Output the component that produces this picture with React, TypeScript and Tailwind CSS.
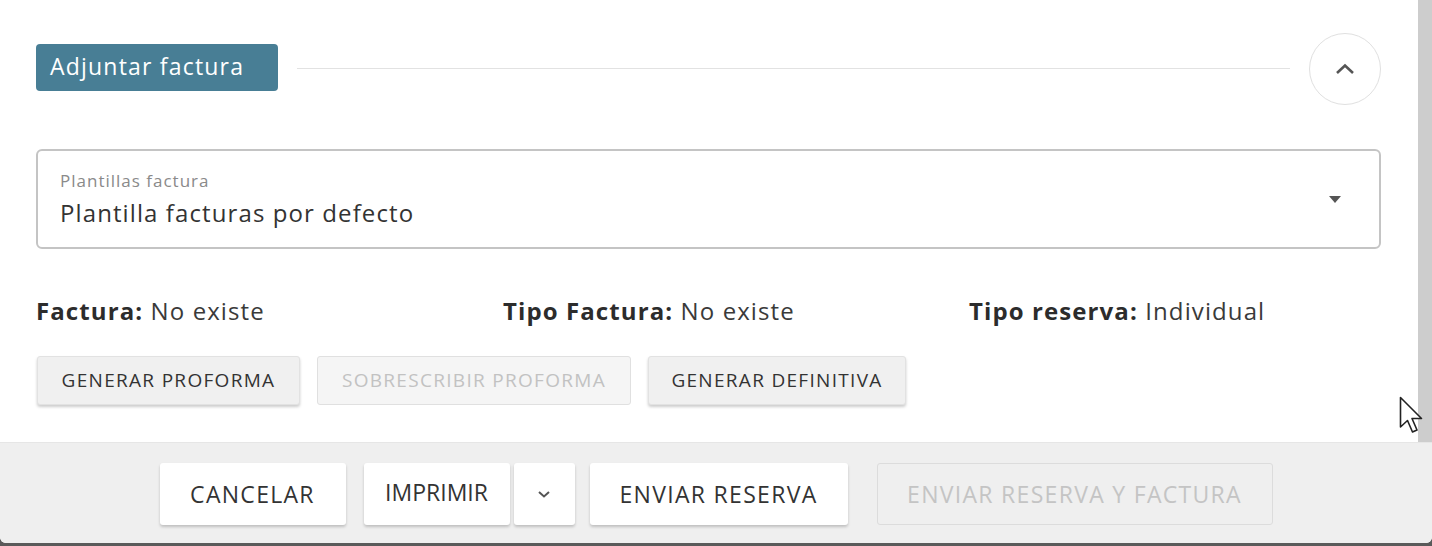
import React from "react";

const font = { fontFamily: "'Open Sans', 'Noto Sans', sans-serif" };

export default function App() {
  return (
    <div className="relative w-[1432px] h-[546px] bg-[#5a5a5a] overflow-hidden" style={font}>
      <div className="flex flex-col h-[543px] rounded-b-[6px] overflow-hidden bg-white">
        <div className="flex h-[442px]">
          <div className="flex-1 pl-[36px] pr-[37px]">
            <div className="flex items-center h-[72px] mt-[33px]">
              <div className="h-[47px] w-[242px] rounded-[4px] bg-[#487e95] text-white text-[23px] tracking-[1.2px] leading-[45px] pl-[14px] -mt-[4px] whitespace-nowrap">
                Adjuntar factura
              </div>
              <div className="flex-1 h-px bg-[#e2e2e2] mx-[19px] -mt-[2px]" />
              <div className="w-[72px] h-[72px] rounded-full border border-[#e0e0e0] flex items-center justify-center">
                <svg width="22" height="14" viewBox="0 0 22 14" fill="none">
                  <path d="M3 11 L11 3.5 L19 11" stroke="#555" strokeWidth="2.6" />
                </svg>
              </div>
            </div>
            <div className="mt-[44px] h-[100px] rounded-[6px] border-2 border-[#c4c4c4] flex items-center pl-[22px] pr-[38px]">
              <div className="flex-1">
                <div className="text-[17px] tracking-[1px] text-[#8a8a8a] leading-[20px]">Plantillas factura</div>
                <div className="text-[24px] tracking-[1.1px] text-[#333] leading-[28px] mt-[8px]">Plantilla facturas por defecto</div>
              </div>
              <svg width="12" height="7" viewBox="0 0 12 7">
                <path d="M0 0 L12 0 L6 7 Z" fill="#555" />
              </svg>
            </div>
            <div className="grid grid-cols-[467px_466px_1fr] mt-[48px] text-[24px] tracking-[1.1px] leading-[28px] text-[#3a3a3a]">
              <div><span className="font-bold text-[#2c2c2c]">Factura:</span> No existe</div>
              <div><span className="font-bold text-[#2c2c2c]">Tipo Factura:</span> No existe</div>
              <div><span className="font-bold text-[#2c2c2c]">Tipo reserva:</span> Individual</div>
            </div>
            <div className="flex gap-[17px] mt-[31px] pl-px">
              <button className="w-[263px] h-[49px] rounded-[3px] bg-[#f0f0f0] border border-[#e2e2e2] shadow-[0_2px_3px_rgba(0,0,0,0.2)] text-[19px] tracking-[1.3px] text-[#333] uppercase whitespace-nowrap">
                Generar proforma
              </button>
              <button className="w-[314px] h-[49px] rounded-[3px] bg-[#f5f5f5] border border-[#e0e0e0] text-[19px] tracking-[1.3px] text-[#c2c2c2] uppercase whitespace-nowrap">
                Sobrescribir proforma
              </button>
              <button className="w-[258px] h-[49px] rounded-[3px] bg-[#f0f0f0] border border-[#e2e2e2] shadow-[0_2px_3px_rgba(0,0,0,0.2)] text-[19px] tracking-[1.3px] text-[#333] uppercase whitespace-nowrap">
                Generar definitiva
              </button>
            </div>
          </div>
          <div className="w-[14px] bg-[#cdcdcd]" />
        </div>
        <div className="flex-1 bg-[#efefef] border-t border-[#e6e6e6] flex justify-center pt-[20px]">
          <div className="flex h-[62px] whitespace-nowrap">
            <button className="w-[186px] h-[62px] bg-white rounded-[3px] shadow-[0_2px_3px_rgba(0,0,0,0.2)] text-[23px] tracking-[1.3px] text-[#333]">CANCELAR</button>
            <button className="ml-[18px] w-[146px] h-[62px] bg-white rounded-[3px] shadow-[0_2px_3px_rgba(0,0,0,0.2)] text-[23px] text-[#333] pb-[4px]">IMPRIMIR</button>
            <button className="ml-[4px] w-[61px] h-[62px] bg-white rounded-[3px] shadow-[0_2px_3px_rgba(0,0,0,0.2)] flex items-center justify-center">
              <svg width="14" height="9" viewBox="0 0 14 9" fill="none">
                <path d="M2 2 L7 6.5 L12 2" stroke="#555" strokeWidth="2" />
              </svg>
            </button>
            <button className="ml-[15px] w-[258px] h-[62px] bg-white rounded-[3px] shadow-[0_2px_3px_rgba(0,0,0,0.2)] text-[23px] tracking-[1.3px] text-[#333]">ENVIAR RESERVA</button>
            <button className="ml-[29px] w-[396px] h-[62px] rounded-[3px] border border-[#dcdcdc] text-[23px] tracking-[1.3px] text-[#c4c4c4]">ENVIAR RESERVA Y FACTURA</button>
          </div>
        </div>
      </div>
      <svg className="absolute left-[1399px] top-[396px]" width="26" height="40" viewBox="0 0 26 40">
        <path d="M1.5 1.5 L1.5 31 L8.5 24.5 L13.5 36 L18 34 L13 22.5 L22.5 22.5 Z" fill="white" stroke="#222" strokeWidth="1.6" strokeLinejoin="round" />
      </svg>
    </div>
  );
}
